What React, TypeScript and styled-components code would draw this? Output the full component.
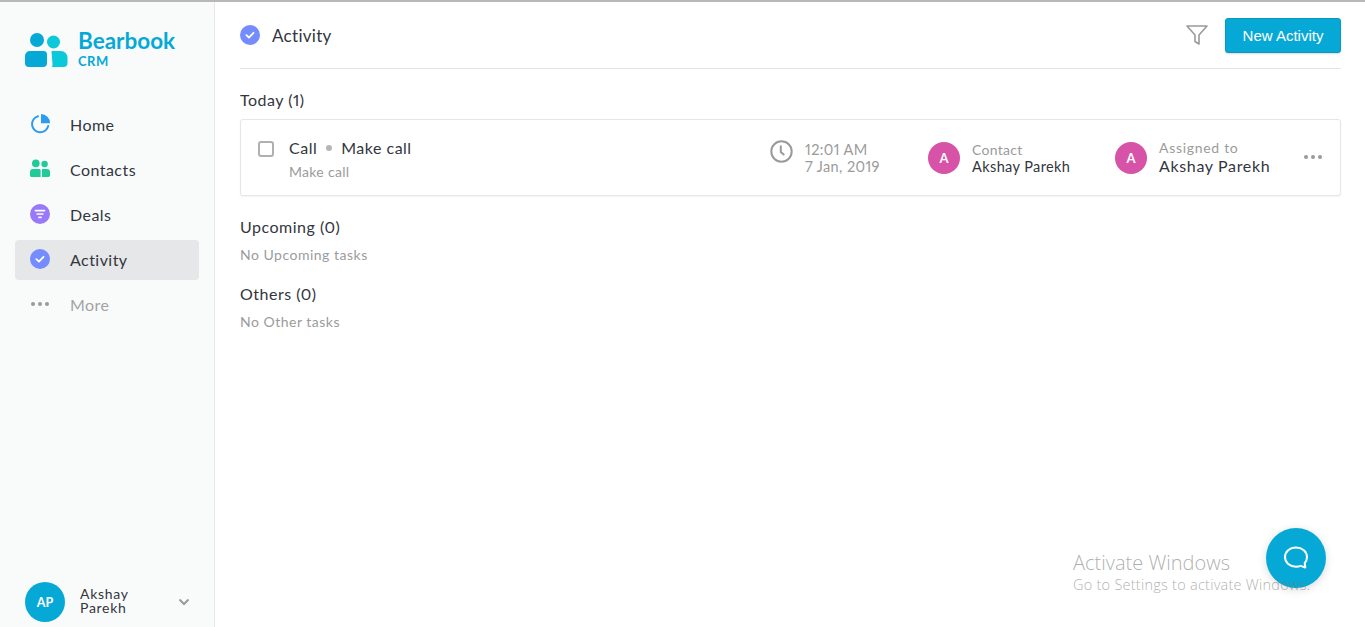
import React from "react";
import styled, { createGlobalStyle } from "styled-components";

const GlobalStyle = createGlobalStyle`
  html, body {
    margin: 0;
    padding: 0;
    height: 100%;
    overflow: hidden;
    background: #fff;
  }
  body {
    font-family: "Lato", "Open Sans", sans-serif;
    color: #33363d;
    font-variant-numeric: proportional-nums;
  }
  * {
    box-sizing: border-box;
  }
`;

const ActivityIcon: React.FC<{ size: number }> = ({ size }) => (
  <svg width={size} height={size} viewBox="0 0 20 20">
    <circle cx="10" cy="10" r="10" fill="#748cfd" />
    <path d="M6.4 10.2l2.5 2.4 4.6-4.8" fill="none" stroke="#fff" strokeWidth="1.8" strokeLinecap="round" strokeLinejoin="round" />
  </svg>
);

const HomeIcon = () => (
  <svg width="20" height="20" viewBox="0 0 20 20">
    <path d="M8 2.200A8.200 8.200 0 1 0 18.200 12" fill="none" stroke="#2d9cf0" strokeWidth="2" strokeLinecap="round" />
    <path d="M11 0a9 9 0 0 1 9 9.200h-9z" fill="#2d9cf0" />
  </svg>
);

const ContactsIcon = () => (
  <svg width="20" height="20" viewBox="0 0 20 20">
    <circle cx="5.800" cy="4.400" r="3.800" fill="#1fcb98" />
    <circle cx="14.600" cy="5" r="3.200" fill="#1fcb98" />
    <path d="M3 10h6.400a1.200 1.200 0 0 1 1.200 1.200V18H1.400A1.400 1.400 0 0 1 0 16.600V13a3 3 0 0 1 3-3z" fill="#1fcb98" />
    <path d="M12 10h5a3 3 0 0 1 3 3v3.600a1.400 1.400 0 0 1-1.400 1.400H12z" fill="#1fcb98" />
  </svg>
);

const DealsIcon = () => (
  <svg width="20" height="20" viewBox="0 0 20 20">
    <circle cx="10" cy="10" r="10" fill="#9a78fa" />
    <path d="M5.500 6.600h9M7.200 10h5.600M9 13.400h2" stroke="#fff" strokeWidth="1.700" strokeLinecap="round" />
  </svg>
);

const DotsIcon: React.FC<{ color: string; width: number }> = ({ color, width }) => (
  <svg width={width} height="4" viewBox="0 0 18 4">
    <circle cx="2" cy="2" r="2" fill={color} />
    <circle cx="9" cy="2" r="2" fill={color} />
    <circle cx="16" cy="2" r="2" fill={color} />
  </svg>
);

const LogoMark = () => (
  <svg width="43" height="34" viewBox="0 0 43 34">
    <circle cx="12" cy="7" r="7" fill="#06a9d6" />
    <circle cx="28.500" cy="9" r="6.500" fill="#0cc9d9" />
    <path d="M5 18h13.500a3.500 3.500 0 0 1 3.500 3.500V30a4 4 0 0 1-4 4H4a4 4 0 0 1-4-4v-7a5 5 0 0 1 5-5z" fill="#06a9d6" />
    <path d="M26.500 18H36a6.500 6.500 0 0 1 6.500 6.500V30a4 4 0 0 1-4 4h-12a2.500 2.500 0 0 0 1-2.500z" fill="#0cc9d9" />
  </svg>
);

const navItems = [
  { label: "Home", icon: <HomeIcon /> },
  { label: "Contacts", icon: <ContactsIcon /> },
  { label: "Deals", icon: <DealsIcon /> },
  { label: "Activity", icon: <ActivityIcon size={20} />, active: true },
  { label: "More", icon: <DotsIcon color="#9a9a9a" width={18} />, muted: true },
];

export default function App() {
  return (
    <>
      <GlobalStyle />
      <Page>
        <Sidebar>
          <div>
            <Logo>
              <LogoMark />
              <LogoText>
                <LogoName>Bearbook</LogoName>
                <LogoSub>CRM</LogoSub>
              </LogoText>
            </Logo>
            <Nav>
              {navItems.map((item) => (
                <NavItem key={item.label} $active={item.active} $muted={item.muted}>
                  <NavIcon>{item.icon}</NavIcon>
                  {item.label}
                </NavItem>
              ))}
            </Nav>
          </div>
          <UserRow>
            <UserAvatar>AP</UserAvatar>
            <UserName>
              Akshay
              <br />
              Parekh
            </UserName>
            <svg width="12" height="8" viewBox="0 0 12 8">
              <path d="M1.500 1.500L6 6l4.500-4.500" fill="none" stroke="#9a9a9a" strokeWidth="2" />
            </svg>
          </UserRow>
        </Sidebar>
        <Main>
          <Header>
            <ActivityIcon size={20} />
            <Title>Activity</Title>
            <FilterButton>
              <svg width="24" height="22" viewBox="0 0 24 22">
                <path d="M2 2h20l-8 9v9l-4-2.500V11z" fill="none" stroke="#9a9a9a" strokeWidth="1.600" strokeLinejoin="round" />
              </svg>
            </FilterButton>
            <PrimaryButton>New Activity</PrimaryButton>
          </Header>

          <SectionTitle $top={21}>Today (1)</SectionTitle>
          <Card>
            <Checkbox />
            <CardBody>
              <TaskTitle>
                Call
                <Dot />
                Make call
              </TaskTitle>
              <TaskSub>Make call</TaskSub>
            </CardBody>
            <TimeGroup>
              <svg width="23" height="23" viewBox="0 0 23 23">
                <circle cx="11.500" cy="11.500" r="10.200" fill="none" stroke="#9a9a9a" strokeWidth="2" />
                <path d="M10.800 5.500v6.500l3.500 3" fill="none" stroke="#9a9a9a" strokeWidth="2" />
              </svg>
              <TimeText>
                12:01 AM
                <br />
                7 Jan, 2019
              </TimeText>
            </TimeGroup>
            <PersonGroup $width={187}>
              <Avatar>A</Avatar>
              <div>
                <PersonLabel>Contact</PersonLabel>
                <PersonName>Akshay Parekh</PersonName>
              </div>
            </PersonGroup>
            <PersonGroup $width={189}>
              <Avatar>A</Avatar>
              <div>
                <PersonLabel $wide>Assigned to</PersonLabel>
                <PersonName $large>Akshay Parekh</PersonName>
              </div>
            </PersonGroup>
            <MoreButton>
              <DotsIcon color="#9a9a9a" width={18} />
            </MoreButton>
          </Card>

          <SectionTitle $top={21}>Upcoming (0)</SectionTitle>
          <EmptyNote>No Upcoming tasks</EmptyNote>
          <SectionTitle $top={20}>Others (0)</SectionTitle>
          <EmptyNote>No Other tasks</EmptyNote>
        </Main>
        <ChatButton>
          <svg width="28" height="26" viewBox="0 0 28 26">
            <path
              d="M14 2.500c6.200 0 11 3.900 11 9.600 0 2.400-.9 4.500-2.300 6.100l.6 4.300-4.600-1.600c-1.400.5-3 .8-4.700.8-6.200 0-11-3.900-11-9.600S7.800 2.500 14 2.500z"
              fill="none"
              stroke="#fff"
              strokeWidth="2"
              strokeLinejoin="round"
            />
          </svg>
        </ChatButton>
        <Watermark>
          <WatermarkTitle>Activate Windows</WatermarkTitle>
          <WatermarkSub>Go to Settings to activate Windows.</WatermarkSub>
        </Watermark>
      </Page>
    </>
  );
}

const Page = styled.div`
  position: relative;
  display: flex;
  height: 100vh;
  border-top: 2px solid #b8b8b8;
  overflow: hidden;
`;

const Sidebar = styled.aside`
  flex: 0 0 215px;
  display: flex;
  flex-direction: column;
  justify-content: space-between;
  padding: 0 15px 5px;
  background: #f9fbfb;
  border-right: 1px solid #e8e8e8;
`;

const Logo = styled.div`
  display: flex;
  align-items: center;
  gap: 10px;
  height: 96px;
  padding: 0 0 0 10px;
`;

const LogoText = styled.div`
  display: flex;
  flex-direction: column;
  gap: 4px;
  margin-top: -2px;
  color: #06a9d6;
  font-weight: 700;
`;

const LogoName = styled.div`
  font-size: 22.500px;
  line-height: 20px;
`;

const LogoSub = styled.div`
  font-size: 13px;
  line-height: 13px;
  letter-spacing: 0.500px;
`;

const Nav = styled.nav`
  display: flex;
  flex-direction: column;
  gap: 5px;
  margin-top: 7px;
`;

const NavItem = styled.a<{ $active?: boolean; $muted?: boolean }>`
  display: flex;
  align-items: center;
  height: 40px;
  padding: 0 0 2px 15px;
  border-radius: 4px;
  font-size: 16px;
  letter-spacing: 0.450px;
  background: ${({ $active }) => ($active ? "#e6e7e8" : "transparent")};
  color: ${({ $muted }) => ($muted ? "#a3a3a3" : "#33363d")};
`;

const NavIcon = styled.span`
  display: flex;
  align-items: center;
  justify-content: center;
  width: 20px;
  margin-right: 20px;
`;

const UserRow = styled.div`
  display: flex;
  align-items: center;
  padding: 0 9px 0 10px;
`;

const UserAvatar = styled.div`
  display: flex;
  align-items: center;
  justify-content: center;
  width: 40px;
  height: 40px;
  border-radius: 50%;
  background: #06a9d6;
  color: #fff;
  font-size: 12.500px;
  font-weight: 700;
`;

const UserName = styled.div`
  flex: 1;
  margin: -2px 0 0 15px;
  font-size: 14px;
  line-height: 14px;
  letter-spacing: 0.700px;
`;

const Main = styled.main`
  flex: 1;
  padding: 0 24px 0 25px;
`;

const Header = styled.header`
  display: flex;
  align-items: center;
  height: 67px;
  border-bottom: 1px solid #e4e4e4;
`;

const Title = styled.h1`
  flex: 1;
  margin: 1px 0 0 12px;
  font-size: 17px;
  font-weight: 400;
  letter-spacing: 0.300px;
`;

const FilterButton = styled.span`
  display: flex;
  margin-right: 16px;
`;

const PrimaryButton = styled.button`
  width: 116px;
  height: 35px;
  border: 1px solid #0898c0;
  border-radius: 3px;
  background: #06a9d6;
  color: #fff;
  font-family: "Liberation Sans", sans-serif;
  font-size: 15px;
  box-shadow: 0 1px 2px rgba(0, 0, 0, 0.15);
`;

const SectionTitle = styled.h2<{ $top: number }>`
  margin: ${({ $top }) => $top}px 0 0;
  font-size: 16px;
  line-height: 20px;
  font-weight: 400;
  letter-spacing: 0.500px;
`;

const Card = styled.div`
  display: flex;
  align-items: center;
  height: 77px;
  margin-top: 9px;
  padding-left: 17px;
  border: 1px solid #e6e6e6;
  border-radius: 3px;
  background: #fff;
  box-shadow: 0 1px 2px rgba(0, 0, 0, 0.05);
`;

const Checkbox = styled.span`
  flex: none;
  width: 16px;
  height: 16px;
  margin: -17px 15px 0 0;
  border: 2px solid #b0b0b0;
  border-radius: 3px;
`;

const CardBody = styled.div`
  flex: 1;
  padding-top: 3px;
`;

const TaskTitle = styled.div`
  display: flex;
  align-items: center;
  font-size: 16px;
  line-height: 20px;
  letter-spacing: 0.500px;
`;

const Dot = styled.span`
  width: 6px;
  height: 6px;
  margin: 0 9px;
  border-radius: 50%;
  background: #b5b5b5;
`;

const TaskSub = styled.div`
  margin-top: 5px;
  font-size: 14px;
  line-height: 18px;
  letter-spacing: 0.300px;
  color: #9b9b9b;
`;

const TimeGroup = styled.div`
  flex: 0 0 158px;
  display: flex;
  align-items: flex-start;
  gap: 12px;
`;

const TimeText = styled.div`
  margin-top: 1px;
  font-size: 14.500px;
  line-height: 17px;
  letter-spacing: 0.400px;
  color: #9b9b9b;
`;

const PersonGroup = styled.div<{ $width: number }>`
  flex: 0 0 ${({ $width }) => $width}px;
  display: flex;
  align-items: center;
  gap: 12px;
`;

const Avatar = styled.div`
  display: flex;
  align-items: center;
  justify-content: center;
  width: 32px;
  height: 32px;
  border-radius: 50%;
  background: #d653a8;
  color: #fff;
  font-size: 13px;
  font-weight: 700;
`;

const PersonLabel = styled.div<{ $wide?: boolean }>`
  font-size: 14px;
  line-height: 17px;
  letter-spacing: ${({ $wide }) => ($wide ? "0.700px" : "0.300px")};
  color: #9b9b9b;
`;

const PersonName = styled.div<{ $large?: boolean }>`
  font-size: ${({ $large }) => ($large ? "16px" : "14.500px")};
  line-height: ${({ $large }) => ($large ? "20px" : "17px")};
  letter-spacing: ${({ $large }) => ($large ? "0.650px" : "0.400px")};
`;

const MoreButton = styled.span`
  display: flex;
  width: 36px;
  margin-top: -2px;
`;

const EmptyNote = styled.div`
  margin-top: 9px;
  font-size: 14px;
  line-height: 18px;
  letter-spacing: 0.500px;
  color: #9b9b9b;
`;

const ChatButton = styled.div`
  position: absolute;
  top: 526px;
  left: 1266px;
  display: flex;
  align-items: center;
  justify-content: center;
  width: 60px;
  height: 60px;
  border-radius: 50%;
  background: #06a9d6;
  box-shadow: 0 2px 8px rgba(0, 0, 0, 0.15);
`;

const Watermark = styled.div`
  position: absolute;
  top: 548px;
  left: 1073px;
  font-family: "Open Sans", sans-serif;
  font-weight: 300;
  color: rgba(120, 120, 120, 0.6);
  pointer-events: none;
`;

const WatermarkTitle = styled.div`
  font-size: 20px;
  line-height: 26px;
`;

const WatermarkSub = styled.div`
  font-size: 14.500px;
  line-height: 18px;
  letter-spacing: 0.250px;
`;
